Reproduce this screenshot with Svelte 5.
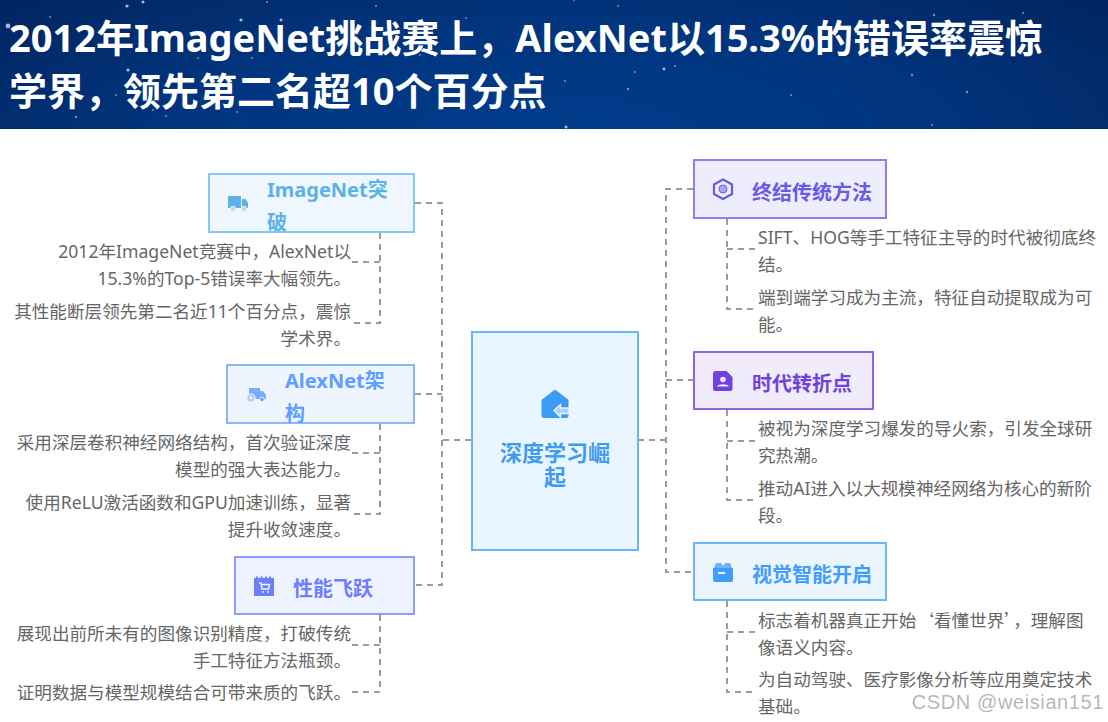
<script lang="ts">
	const stars = [
		[127, 6, 1.6], [143, 2, 1.5], [267, 2, 1], [376, 6, 1], [50, 17, 1], [8, 26, 2.4], [241, 20, 1.6], [281, 20, 1.5],
		[198, 58, 1], [252, 58, 1], [128, 70, 1.6], [116, 95, 1], [153, 110, 1], [76, 117, 1.2], [166, 116, 1], [237, 112, 1],
		[329, 97, 1], [466, 18, 1], [420, 55, 1], [574, 0, 1], [618, 6, 1], [934, 15, 1.2], [1023, 13, 1.1], [635, 72, 1],
		[664, 69, 1.4], [675, 66, 1], [565, 81, 1], [628, 89, 1.2], [912, 75, 1.2], [967, 92, 1.2], [791, 95, 1], [566, 127, 1.5], [932, 125, 1]
	];

	const nodes = [
		{ id: 'truck', title: 'ImageNet突破', x: 208, y: 173, w: 207, h: 60, color: '#5cb2e6', bg: '#edf7fd', border: '#85c9f0', tw: 132 },
		{ id: 'van', title: 'AlexNet架构', x: 226, y: 364, w: 189, h: 60, color: '#619fff', bg: '#eef5ff', border: '#8ab6ff', tw: 110 },
		{ id: 'cart', title: '性能飞跃', x: 234, y: 556, w: 181, h: 59, color: '#6c7dff', bg: '#eff2ff', border: '#8e9bff', tw: 90 },
		{ id: 'hex', title: '终结传统方法', x: 693, y: 159, w: 194, h: 60, color: '#6a5ae6', bg: '#eeedfc', border: '#8a80f0', tw: 130 },
		{ id: 'doc', title: '时代转折点', x: 693, y: 351, w: 181, h: 59, color: '#6f42dc', bg: '#f0ecfb', border: '#8a66e4', tw: 110 },
		{ id: 'box', title: '视觉智能开启', x: 693, y: 542, w: 194, h: 59, color: '#429dfa', bg: '#eaf5fe', border: '#69b6fb', tw: 130 }
	];

	const leftNotes = [
		{ y: 238, lines: ['2012年ImageNet竞赛中，AlexNet以', '15.3%的Top-5错误率大幅领先。'] },
		{ y: 298, lines: ['其性能断层领先第二名近11个百分点，震惊', '学术界。'] },
		{ y: 429, lines: ['采用深层卷积神经网络结构，首次验证深度', '模型的强大表达能力。'] },
		{ y: 489, lines: ['使用ReLU激活函数和GPU加速训练，显著', '提升收敛速度。'] },
		{ y: 620, lines: ['展现出前所未有的图像识别精度，打破传统', '手工特征方法瓶颈。'] },
		{ y: 679, lines: ['证明数据与模型规模结合可带来质的飞跃。'] }
	];

	const rightNotes = [
		{ y: 224, lines: ['SIFT、HOG等手工特征主导的时代被彻底终', '结。'] },
		{ y: 284, lines: ['端到端学习成为主流，特征自动提取成为可', '能。'] },
		{ y: 415, lines: ['被视为深度学习爆发的导火索，引发全球研', '究热潮。'] },
		{ y: 475, lines: ['推动AI进入以大规模神经网络为核心的新阶', '段。'] },
		{ y: 606, lines: ['标志着机器真正开始‘看懂世界’，理解图', '像语义内容。'] },
		{ y: 666, lines: ['为自动驾驶、医疗影像分析等应用奠定技术', '基础。'] }
	];

	const links = [
		'M471 440H442M415 203H442V585H415M415 394H442',
		'M638 440H666M693 189H666V572H693M666 380H693',
		'M380 233V323H351M380 262H351',
		'M380 424V514H351M380 453H351',
		'M380 615V692H351M380 645H351',
		'M727 219V309H757M727 249H757',
		'M727 410V500H757M727 441H757',
		'M727 601V692H757M727 632H757'
	];
</script>

<div class="page">
	<header class="banner">
		<svg class="sky" viewBox="0 0 1108 129" aria-hidden="true">
			{#each stars as [cx, cy, r]}
				<circle {cx} {cy} {r} fill="#cfe0f5" opacity={r > 1.3 ? 0.8 : 0.55} />
			{/each}
		</svg>
		<h1>2012年ImageNet挑战赛上，AlexNet以15.3%的错误率震惊<br />学界，领先第二名超10个百分点</h1>
	</header>

	<main class="map">
		<svg class="links" viewBox="0 129 1108 593" aria-hidden="true">
			{#each links as d}
				<path {d} fill="none" stroke="#9c97aa" stroke-width="2" stroke-dasharray="6 5" />
			{/each}
		</svg>

		<div class="hub">
			<svg width="30" height="30" viewBox="0 0 30 30" aria-hidden="true">
				<path d="M15 1 L28 11 V27 a1.5 1.5 0 0 1-1.5 1.5 H3.5 A1.5 1.5 0 0 1 2 27 V11 Z" fill="#3b9bf5" stroke="#3b9bf5" stroke-linejoin="round" />
				<path d="M14 21.5 L20.5 15.5 V19 H29 V24.5 H20.5 V28 Z" fill="#a9d3fb" stroke="#eaf5fe" stroke-width="1.4" />
			</svg>
			<div class="hub-title">深度学习崛起</div>
		</div>

		{#each nodes as n}
			<div class="node" style="left:{n.x}px;top:{n.y}px;width:{n.w}px;height:{n.h}px;color:{n.color};background:{n.bg};border-color:{n.border}">
				<svg class="icon" width="22" height="22" viewBox="0 0 22 22" aria-hidden="true">
					{#if n.id === 'truck'}
						<path d="M1 4h13v12H1zM15 7h3.5L21 11v5h-6z" fill="currentColor" />
						<circle cx="6" cy="17" r="2.6" fill="#b5dcf5" stroke={n.bg} />
						<circle cx="17" cy="17" r="2.6" fill="#b5dcf5" stroke={n.bg} />
					{:else if n.id === 'van'}
						<path d="M4 5h11v11H4zM15 8h3l3 4v4h-6z" fill="currentColor" opacity="0.85" />
						<circle cx="6" cy="15" r="4.2" fill="#b4cfff" stroke={n.bg} />
						<circle cx="6" cy="15" r="1.4" fill={n.bg} />
						<circle cx="17" cy="16.5" r="2.2" fill="currentColor" stroke={n.bg} />
					{:else if n.id === 'cart'}
						<path d="M1 3h2V1.5h2V3h2.5V1.5h2V3H12V1.5h2V3h2V1.5h2V3h3v18H1z" fill="currentColor" />
						<path d="M6 8h2l1 6h6.5l1-4.5H8.6" fill="none" stroke={n.bg} stroke-width="1.5" />
						<circle cx="10" cy="17" r="1" fill={n.bg} />
						<circle cx="15" cy="17" r="1" fill={n.bg} />
					{:else if n.id === 'hex'}
						<path d="M11 1.5l9 5v9.5l-9 5-9-5V6.500z" fill="none" stroke="currentColor" stroke-width="2.2" />
						<circle cx="11" cy="11" r="4" fill="#aba4f2" stroke="currentColor" />
					{:else if n.id === 'doc'}
						<path d="M3.500 1h11l6 6v11.500a2.500 2.500 0 0 1-2.500 2.500H3.500A2.500 2.500 0 0 1 1 18.500V3.500A2.500 2.500 0 0 1 3.500 1z" fill="currentColor" />
						<circle cx="11" cy="9.500" r="2.800" fill="#ece6fb" />
						<path d="M5 16.500c1-3 11-3 12 0z" fill="#ece6fb" />
					{:else}
						<path d="M4 2h5l2 3 2-3h5l2 5H2z" fill="#6db3fb" />
						<path d="M1 7h20v12a2 2 0 0 1-2 2H3a2 2 0 0 1-2-2z" fill="currentColor" />
						<path d="M6 11h7v2H6z" fill={n.bg} />
					{/if}
				</svg>
				<div class="node-title" style="width:{n.tw}px">{n.title}</div>
			</div>
		{/each}

		{#each leftNotes as note}
			<p class="note left" style="top:{note.y}px">
				{#each note.lines as line}<span>{line}</span>{/each}
			</p>
		{/each}

		{#each rightNotes as note}
			<p class="note right" style="top:{note.y}px">
				{#each note.lines as line}
					<span>{#each line.split(/([‘’])/) as part}{#if part === '‘' || part === '’'}<i class="quote">{part}</i>{:else}{part}{/if}{/each}</span>
				{/each}
			</p>
		{/each}

		<div class="mark">CSDN @weisian151</div>
	</main>
</div>

<style>
	:global(body) {
		margin: 0;
		background: #fff;
	}

	.page {
		width: 1108px;
		height: 722px;
		overflow: hidden;
		font-family: "Noto Sans", "Noto Sans CJK SC", sans-serif;
	}

	.banner {
		position: relative;
		height: 129px;
		box-sizing: border-box;
		padding: 11px 0 0 9px;
		background: radial-gradient(ellipse 75% 190% at 50% 105%, #003c8c 0%, #01357e 45%, #022560 85%, #021f52 100%);
	}

	.sky {
		position: absolute;
		inset: 0;
		width: 100%;
		height: 100%;
	}

	h1 {
		position: relative;
		margin: 0;
		color: #fff;
		font-size: 38px;
		font-weight: 700;
		line-height: 53px;
		white-space: nowrap;
	}

	.map {
		position: relative;
		height: 593px;
	}

	.links {
		position: absolute;
		left: 0;
		top: 0;
		width: 1108px;
		height: 593px;
	}

	.hub {
		position: absolute;
		left: 471px;
		top: 202px;
		width: 168px;
		height: 220px;
		box-sizing: border-box;
		padding: 56px 24px 0;
		border: 2px solid #69b4fb;
		background: #e9f5ff;
		display: flex;
		flex-direction: column;
		align-items: center;
		gap: 21px;
		color: #3f9bf2;
	}

	.hub-title {
		font-size: 22px;
		font-weight: 700;
		line-height: 24px;
		text-align: center;
		width: 115px;
	}

	.node {
		position: absolute;
		margin-top: -129px;
		box-sizing: border-box;
		border: 2px solid;
		display: flex;
		align-items: center;
		gap: 18px;
		padding-left: 17px;
		overflow: visible;
	}

	.icon {
		flex: none;
	}

	.node-title {
		font-size: 20px;
		font-weight: 700;
		line-height: 33px;
		flex: none;
		word-break: break-all;
		padding-top: 6px;
	}

	.note {
		position: absolute;
		margin: -129px 0 0;
		color: #666;
		font-size: 17.6px;
		line-height: 27px;
		white-space: nowrap;
	}

	.note span {
		display: block;
	}

	.quote {
		font-family: "Noto Sans CJK SC", sans-serif;
		font-style: normal;
	}

	.note.left {
		right: 757px;
		text-align: right;
	}

	.note.right {
		left: 758px;
	}

	.mark {
		position: absolute;
		right: 4px;
		bottom: 8px;
		color: rgba(120, 120, 120, 0.55);
		font-family: "Liberation Sans", sans-serif;
		font-size: 20px;
		letter-spacing: 0.6px;
	}
</style>
